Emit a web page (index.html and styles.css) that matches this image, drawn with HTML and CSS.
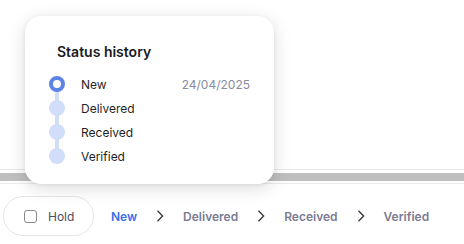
FILE: index.html
```html
<!DOCTYPE html>
<html>
<head>
<meta charset="utf-8">
<link rel="stylesheet" href="styles.css">
</head>
<body>
<div class="page">
  <div class="top"></div>
  <div class="scroll"></div>
  <div class="bottom">
    <label class="hold"><span class="box"></span><span>Hold</span></label>
    <nav class="crumbs">
      <span class="crumb active">New</span>
      <svg class="chev" width="8" height="12" viewBox="0 0 8 12"><path d="M1.5 0.8 L6.6 6 L1.5 11.2" fill="none" stroke="#3a3a44" stroke-width="1.4"/></svg>
      <span class="crumb">Delivered</span>
      <svg class="chev" width="8" height="12" viewBox="0 0 8 12"><path d="M1.5 0.8 L6.6 6 L1.5 11.2" fill="none" stroke="#3a3a44" stroke-width="1.4"/></svg>
      <span class="crumb">Received</span>
      <svg class="chev" width="8" height="12" viewBox="0 0 8 12"><path d="M1.5 0.8 L6.6 6 L1.5 11.2" fill="none" stroke="#3a3a44" stroke-width="1.4"/></svg>
      <span class="crumb">Verified</span>
    </nav>
  </div>
  <div class="popover">
    <h3 class="title">Status history</h3>
    <ul class="timeline">
      <li class="row current"><span class="dot"></span><span class="label">New</span><span class="date">24/04/2025</span></li>
      <li class="row"><span class="dot"></span><span class="label">Delivered</span></li>
      <li class="row"><span class="dot"></span><span class="label">Received</span></li>
      <li class="row last"><span class="dot"></span><span class="label">Verified</span></li>
    </ul>
  </div>
</div>
</body>
</html>
```
FILE: styles.css
```css
* { box-sizing: border-box; }
html, body { margin: 0; padding: 0; background: #fff; }
body { font-family: Inter, "Noto Sans", sans-serif; color: #1f1f24; }
.page { position: relative; width: 464px; height: 244px; overflow: hidden; }
.top { height: 170px; border-bottom: 1px solid #e8e8e8; }
.scroll { margin-top: 3px; height: 8px; background: #bfbfbf; }
.bottom { border-top: 1px solid #ececec; margin-top: 2px; display: flex; align-items: center; padding: 12px 0 0 3px; }
.hold { display: flex; align-items: center; gap: 11px; height: 40px; width: 91px; padding-left: 20px; border: 1px solid #e6e6e6; border-radius: 20px; font-size: 12px; color: #4d4d5c; }
.box { width: 13px; height: 13px; border: 1px solid #8a8a8a; border-radius: 3px; background: #fff; }
.crumbs { display: flex; align-items: center; margin-left: 17px; gap: 19px; font-size: 12px; font-weight: 600; }
.crumb { color: #7a7a92; }
.crumb.active { color: #3a6fe8; }
.chev { display: block; }
.popover { position: absolute; left: 25px; top: 16px; width: 249px; height: 168px; background: #fff; border-radius: 16px; box-shadow: 0 4px 18px rgba(0,0,0,0.14), 0 1px 4px rgba(0,0,0,0.06); padding: 27px 24px 0 32px; }
.title { margin: 0 0 11px; font-size: 14px; font-weight: 600; line-height: 18px; color: #1a1a1f; }
.timeline { list-style: none; margin: 0; padding: 0; }
.row { position: relative; display: flex; align-items: center; height: 24px; font-size: 12px; color: #1f1f24; }
.row::after { content: ""; position: absolute; left: -2px; top: 12px; width: 4px; height: 24px; background: #d2def9; }
.row.last::after { display: none; }
.dot { position: absolute; left: -8px; top: 4px; width: 16px; height: 16px; border-radius: 50%; background: #d2def9; z-index: 1; }
.current .dot { background: #fff; border: 4px solid #5b84e6; }
.label { margin-left: 24px; flex: 1; }
.date { color: #8a8aa0; }
```
